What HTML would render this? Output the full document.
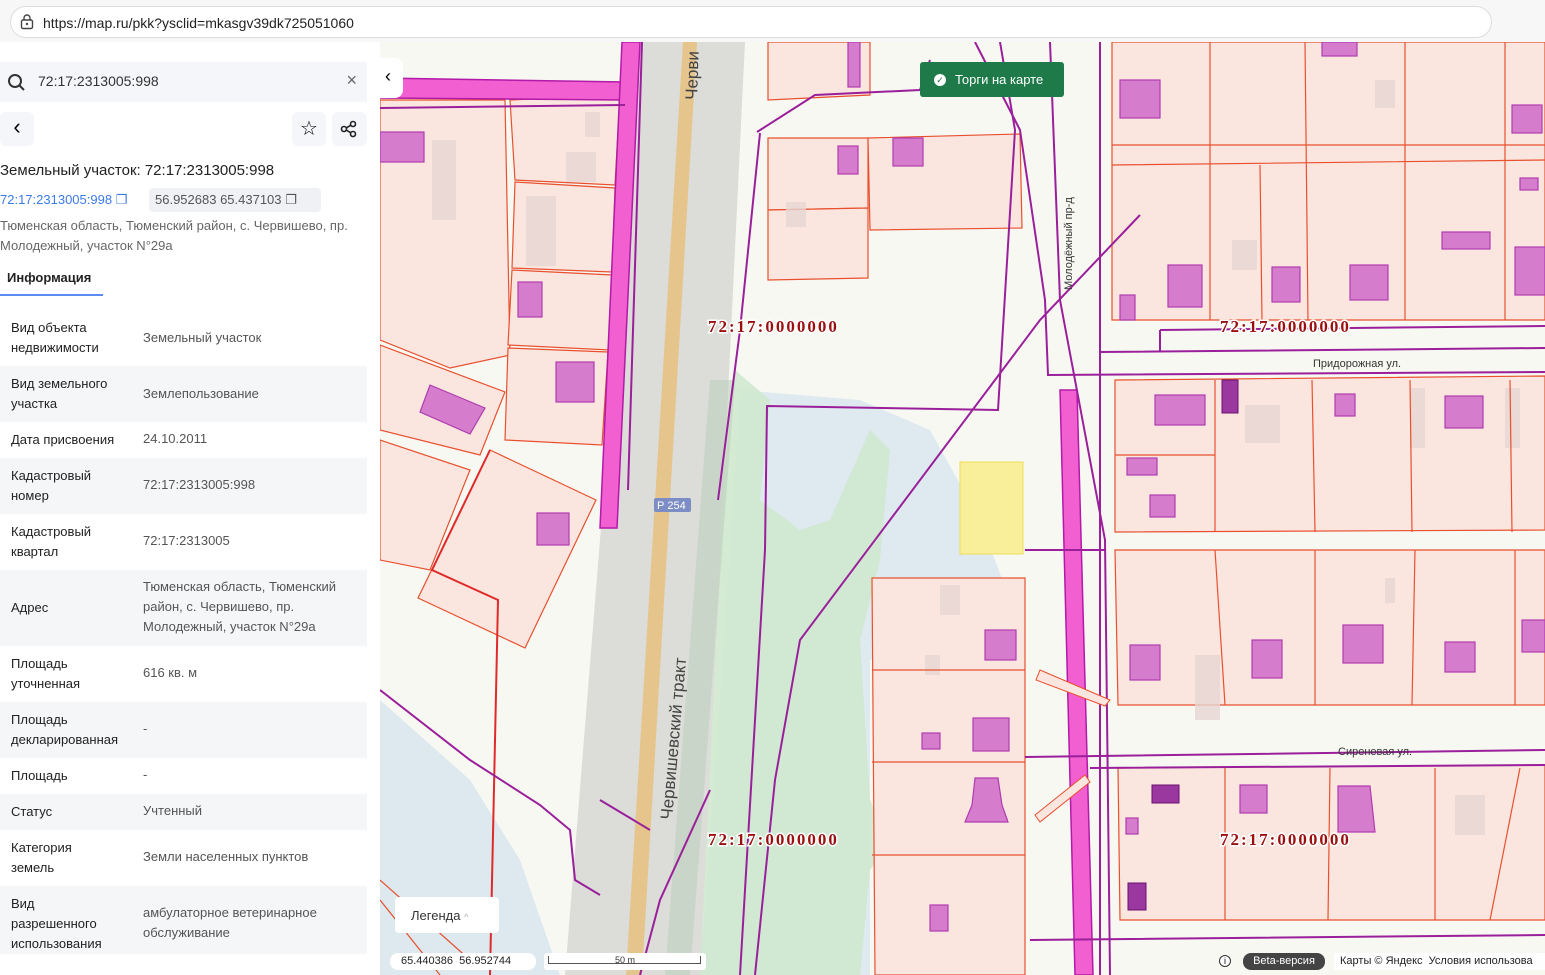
<!DOCTYPE html>
<html><head><meta charset="utf-8"><style>
*{margin:0;padding:0;box-sizing:border-box}
body{width:1545px;height:975px;overflow:hidden;font-family:"Liberation Sans","DejaVu Sans",sans-serif;background:#fff;position:relative}
#top{position:absolute;left:0;top:0;width:1545px;height:42px;background:#f7f7f7}
#url{position:absolute;left:10px;top:6px;width:1482px;height:32px;border:1px solid #ddd;border-radius:16px;background:#fff;font-size:14px;color:#222;padding:8px 0 0 32px}
#map{position:absolute;left:0;top:0}
#panel{position:absolute;left:0;top:42px;width:380px;height:933px;background:#fff}
.row{position:absolute;left:0;width:367px;font-size:13px;color:#222}
.row .k{position:absolute;left:11px;line-height:20px}
.row .v{position:absolute;left:143px;line-height:20px;color:#555}
.alt{background:#f5f6f8}
</style></head><body>
<svg id="map" width="1545" height="975" viewBox="0 0 1545 975">
<rect x="380" y="42" width="1165" height="933" fill="#f8f8f3"/>
<path d="M380 700 L470 780 L520 860 L560 975 L380 975Z" fill="#dde9ef"/>
<path d="M740 390 L860 400 L930 430 L980 520 L1010 600 L870 660 L870 975 L700 975 L720 700Z" fill="#dfeaf0"/>
<path d="M735 370 L770 400 L760 500 L800 530 L830 520 L870 430 L890 450 L880 560 L860 640 L870 800 L890 840 L870 870 L860 975 L690 975 L700 700Z" fill="#cfe8cf" opacity=".9"/>
<path d="M640 42 L745 42 L700 975 L565 975Z" fill="#dcdcd9"/>
<path d="M683 42 L697 42 L642 975 L626 975Z" fill="#e6c58c"/>
<path d="M710 380 L735 380 L690 975 L665 975Z" fill="#bcd1bc" opacity=".6"/>
<g fill="#fbe6df" stroke="#e8502e" stroke-width="1.2">
<path d="M380 100 L505 100 L510 355 L450 368 L380 340Z"/>
<path d="M510 100 L620 95 L615 185 L515 180Z"/>
<path d="M515 182 L615 188 L612 272 L512 268Z"/>
<path d="M512 270 L612 275 L610 350 L508 345Z"/>
<path d="M508 348 L608 352 L602 445 L505 440Z"/>
<path d="M380 345 L505 392 L480 455 L380 430Z"/>
<path d="M490 450 L596 500 L525 648 L418 598Z"/>
<path d="M380 440 L470 470 L430 570 L380 560Z"/>
<path d="M768 42 L870 42 L870 95 L768 100Z"/>
<path d="M768 138 L868 138 L868 208 L768 210Z"/>
<path d="M768 210 L868 208 L868 278 L768 280Z"/>
<path d="M868 138 L1020 134 L1022 228 L870 230Z"/>
<path d="M872 578 L1025 578 L1025 975 L875 975Z"/>
<path d="M1112 42 L1545 42 L1545 320 L1112 320Z"/>
<path d="M1115 380 L1545 376 L1545 530 L1115 532Z"/>
<path d="M1115 550 L1545 550 L1545 705 L1118 705Z"/>
<path d="M1118 768 L1545 765 L1545 920 L1120 920Z"/>
</g>
<g fill="#e6d6d2" opacity=".8">
<rect x="432" y="140" width="24" height="80"/><rect x="526" y="196" width="30" height="70"/><rect x="585" y="112" width="15" height="25"/>
<rect x="566" y="152" width="30" height="30"/><rect x="786" y="202" width="20" height="25"/><rect x="1232" y="240" width="25" height="30"/>
<rect x="1375" y="80" width="20" height="28"/><rect x="1245" y="405" width="35" height="38"/><rect x="1410" y="388" width="15" height="60"/>
<rect x="1505" y="388" width="15" height="60"/><rect x="1195" y="655" width="25" height="65"/><rect x="1385" y="578" width="10" height="25"/>
<rect x="940" y="585" width="20" height="30"/><rect x="925" y="655" width="15" height="20"/><rect x="1455" y="795" width="30" height="40"/>
</g>
<g stroke="#e8502e" stroke-width="1.2" fill="none">
<path d="M872 670 L1025 670 M872 762 L1025 762 M872 855 L1025 855"/>
<path d="M1210 42 L1210 320 M1305 42 L1308 320 M1405 42 L1405 320 M1505 42 L1505 320 M1112 145 L1545 145 M1112 165 L1545 160 M1260 165 L1262 320"/>
<path d="M1215 380 L1215 532 M1312 380 L1315 532 M1410 380 L1412 532 M1510 380 L1512 532 M1115 455 L1215 455"/>
<path d="M1215 550 L1225 705 M1315 550 L1315 705 M1415 550 L1412 705 M1515 550 L1515 705"/>
<path d="M1225 768 L1225 920 M1330 768 L1328 920 M1435 768 L1435 920 M1520 768 L1490 920"/>
<path d="M490 450 L432 570 L498 600 L490 975" stroke="#e02a2a" stroke-width="2"/>
<path d="M380 880 L470 960 M380 900 L440 975"/>
</g>
<g fill="#d57ccc" stroke="#b03cb0" stroke-width="1.2">
<rect x="380" y="132" width="44" height="30"/><rect x="518" y="282" width="24" height="35"/>
<rect x="556" y="362" width="38" height="40"/><path d="M430 385 L485 408 L470 434 L420 412Z"/>
<rect x="537" y="513" width="32" height="32"/><rect x="838" y="146" width="20" height="28"/>
<rect x="893" y="138" width="30" height="28"/><rect x="848" y="42" width="12" height="45"/>
<rect x="985" y="630" width="31" height="30"/><rect x="973" y="718" width="36" height="33"/>
<path d="M975 778 L998 778 L1002 805 L1008 822 L965 822 L972 805Z"/><rect x="922" y="733" width="18" height="16"/>
<rect x="930" y="905" width="18" height="26"/><rect x="1120" y="80" width="40" height="38"/>
<rect x="1168" y="265" width="34" height="42"/><rect x="1350" y="265" width="38" height="35"/>
<rect x="1442" y="232" width="48" height="17"/><rect x="1515" y="247" width="30" height="48"/>
<rect x="1120" y="295" width="15" height="25"/><rect x="1272" y="267" width="28" height="35"/>
<rect x="1155" y="395" width="50" height="30"/><rect x="1445" y="396" width="38" height="32"/>
<rect x="1335" y="394" width="20" height="22"/><rect x="1127" y="458" width="30" height="17"/>
<rect x="1150" y="495" width="25" height="22"/><rect x="1130" y="645" width="30" height="35"/>
<rect x="1252" y="640" width="30" height="38"/><rect x="1343" y="625" width="40" height="38"/>
<rect x="1445" y="642" width="30" height="30"/><rect x="1522" y="620" width="23" height="32"/>
<rect x="1240" y="785" width="27" height="28"/><path d="M1338 786 L1370 786 L1375 832 L1338 832Z"/>
<rect x="1126" y="818" width="12" height="16"/><rect x="1512" y="105" width="30" height="28"/>
<rect x="1520" y="178" width="18" height="12"/><rect x="1322" y="42" width="35" height="14"/>
</g>
<g fill="#9b38a0" stroke="#6a1070"><rect x="1222" y="380" width="16" height="33"/><rect x="1152" y="785" width="27" height="18"/><rect x="1128" y="883" width="18" height="27"/></g>
<g fill="#f25fd0" stroke="#b21aa8" stroke-width="1.5">
<path d="M380 78 L625 82 L623 100 L380 98Z"/>
<path d="M622 42 L640 42 L617 528 L600 528Z"/>
<path d="M1060 390 L1077 390 L1093 975 L1075 975Z"/>
</g>
<g stroke="#9a1f9a" stroke-width="2" fill="none">
<path d="M380 108 L625 105 M642 42 L628 490"/>
<path d="M757 132 L815 95 L920 90 L930 60 M760 133 L740 330 L718 500"/>
<path d="M975 42 L1020 130 L1045 300 L1048 375 L1545 372"/>
<path d="M1000 42 L1015 130 L998 410 L767 406 L765 550 L740 975"/>
<path d="M1140 215 L1040 320 L800 640 L775 780 L755 975"/>
<path d="M1050 42 L1060 300 L1105 540 L1110 975"/>
<path d="M1100 42 L1100 975"/>
<path d="M1100 352 L1545 348 M1160 330 L1545 326 M1160 330 L1160 352"/>
<path d="M1025 550 L1105 550 M1025 757 L1545 750 M1030 940 L1545 935 M1090 768 L1545 765"/>
<path d="M380 690 L470 760 L540 805 L570 830 L575 880 L600 895 M600 800 L650 830 M710 790 L660 900 L640 975"/>
</g>
<path d="M1040 670 L1110 700 L1105 706 L1036 680Z M1035 815 L1085 775 L1090 782 L1040 822Z" fill="#fbe6df" stroke="#e8502e"/>
<rect x="960" y="462" width="63" height="92" fill="#f9ef9a" stroke="#eedd55"/>
<g font-family="Liberation Serif" font-weight="bold" font-size="17" letter-spacing="2" fill="#9b0f0f" stroke="#fff" stroke-width="3" paint-order="stroke">
<text x="708" y="332">72:17:0000000</text><text x="1220" y="332">72:17:0000000</text>
<text x="708" y="845">72:17:0000000</text><text x="1220" y="845">72:17:0000000</text></g>
<g font-size="11" fill="#333"><text x="1313" y="367">Придорожная ул.</text><text x="1338" y="755">Сиреневая ул.</text>
<text transform="translate(1072 290) rotate(-90)">Молодёжный пр-д</text>
<text transform="translate(672 820) rotate(-85)" font-size="17" fill="#444">Червишевский тракт</text>
<text transform="translate(697 100) rotate(-88)" font-size="17" fill="#444">Черви</text></g>
<rect x="654" y="498" width="37" height="14" rx="2" fill="#7c8cc4"/><text x="657" y="509" font-size="11" fill="#fff">Р 254</text>
</svg>
<div id="top"><div id="url"><svg style="position:absolute;left:9px;top:7px" width="14" height="16" viewBox="0 0 14 16"><rect x="1.5" y="6" width="11" height="8.5" rx="1.5" fill="none" stroke="#444" stroke-width="1.4"/><path d="M4 6V4a3 3 0 0 1 6 0v2" fill="none" stroke="#444" stroke-width="1.4"/><circle cx="7" cy="10" r="1.2" fill="#444"/></svg>https://map.ru/pkk?ysclid=mkasgv39dk725051060</div></div>
<div style="position:absolute;left:380px;top:58px;width:23px;height:40px;background:#fff;border-radius:0 8px 8px 0;font-size:18px;padding:8px 0 0 5px">‹</div>
<div style="position:absolute;left:920px;top:62px;width:144px;height:35px;background:#1f7a4a;border-radius:3px;color:#fff;font-size:13px;padding:10px 0 0 35px">Торги на карте<span style="position:absolute;left:14px;top:12px;width:12px;height:12px;border-radius:50%;background:#fff;color:#1f7a4a;font-size:9px;text-align:center;line-height:12px">✓</span></div>
<div id="panel">
<div style="position:absolute;left:0;top:20px;width:367px;height:40px;background:#f5f6f9;font-size:14px;color:#333;padding:11px 0 0 38px">72:17:2313005:998<svg style="position:absolute;left:7px;top:11px" width="19" height="19" viewBox="0 0 19 19"><circle cx="8" cy="8" r="6" fill="none" stroke="#333" stroke-width="2"/><path d="M12.5 12.5L17 17" stroke="#333" stroke-width="2"/></svg><span style="position:absolute;right:10px;top:8px;font-size:18px;color:#666">×</span></div>
<div style="position:absolute;left:0;top:70px;width:34px;height:34px;background:#f5f6f9;border-radius:6px;font-size:22px;text-align:center;line-height:30px">‹</div>
<div style="position:absolute;left:292px;top:70px;width:34px;height:34px;background:#f5f6f9;border-radius:6px;font-size:20px;text-align:center;line-height:34px">☆</div>
<div style="position:absolute;left:332px;top:70px;width:35px;height:34px;background:#f5f6f9;border-radius:6px"><svg style="position:absolute;left:8px;top:8px" width="18" height="18" viewBox="0 0 18 18"><circle cx="13" cy="4" r="2.5" fill="none" stroke="#222" stroke-width="1.6"/><circle cx="4" cy="9" r="2.5" fill="none" stroke="#222" stroke-width="1.6"/><circle cx="13" cy="14" r="2.5" fill="none" stroke="#222" stroke-width="1.6"/><path d="M6.2 8L10.8 5.2M6.2 10L10.8 12.8" stroke="#222" stroke-width="1.6"/></svg></div>
<div style="position:absolute;left:0;top:120px;font-size:15px;color:#222">Земельный участок: 72:17:2313005:998</div>
<div style="position:absolute;left:0;top:150px;font-size:13px;color:#3b7be8">72:17:2313005:998 ❐</div>
<div style="position:absolute;left:149px;top:146px;width:172px;height:24px;background:#f0f1f4;border-radius:4px;font-size:13px;color:#555;padding:4px 0 0 6px">56.952683 65.437103 ❐</div>
<div style="position:absolute;left:0;top:174px;font-size:13px;color:#666;line-height:20px;width:370px">Тюменская область, Тюменский район, с. Червишево, пр. Молодежный, участок N°29а</div>
<div style="position:absolute;left:7px;top:228px;font-size:13px;font-weight:bold;color:#222">Информация</div>
<div style="position:absolute;left:0;top:252px;width:103px;height:2px;background:#5b8cf0"></div>
<div class="row" style="top:270px;height:54px"><div class="k" style="top:6px">Вид объекта<br>недвижимости</div><div class="v" style="top:16px">Земельный участок</div></div>
<div class="row alt" style="top:324px;height:56px"><div class="k" style="top:8px">Вид земельного<br>участка</div><div class="v" style="top:18px">Землепользование</div></div>
<div class="row" style="top:380px;height:36px"><div class="k" style="top:8px">Дата присвоения</div><div class="v" style="top:7px">24.10.2011</div></div>
<div class="row alt" style="top:416px;height:56px"><div class="k" style="top:8px">Кадастровый<br>номер</div><div class="v" style="top:17px">72:17:2313005:998</div></div>
<div class="row" style="top:472px;height:56px"><div class="k" style="top:8px">Кадастровый<br>квартал</div><div class="v" style="top:17px">72:17:2313005</div></div>
<div class="row alt" style="top:528px;height:76px"><div class="k" style="top:28px">Адрес</div><div class="v" style="top:7px">Тюменская область, Тюменский<br>район, с. Червишево, пр.<br>Молодежный, участок N°29а</div></div>
<div class="row" style="top:604px;height:56px"><div class="k" style="top:8px">Площадь<br>уточненная</div><div class="v" style="top:17px">616 кв. м</div></div>
<div class="row alt" style="top:660px;height:56px"><div class="k" style="top:8px">Площадь<br>декларированная</div><div class="v" style="top:17px">-</div></div>
<div class="row" style="top:716px;height:36px"><div class="k" style="top:8px">Площадь</div><div class="v" style="top:7px">-</div></div>
<div class="row alt" style="top:752px;height:36px"><div class="k" style="top:8px">Статус</div><div class="v" style="top:7px">Учтенный</div></div>
<div class="row" style="top:788px;height:56px"><div class="k" style="top:8px">Категория<br>земель</div><div class="v" style="top:17px">Земли населенных пунктов</div></div>
<div class="row alt" style="top:844px;height:68px"><div class="k" style="top:8px">Вид<br>разрешенного<br>использования</div><div class="v" style="top:17px">амбулаторное ветеринарное<br>обслуживание</div></div>
</div>
<div style="position:absolute;left:395px;top:897px;width:104px;height:36px;background:#fff;border-radius:4px;font-size:13px;color:#333;padding:11px 0 0 16px">Легенда <span style="font-size:9px;color:#aaa">^</span></div>
<div style="position:absolute;left:390px;top:953px;width:146px;height:17px;background:#fff;border-radius:8px;font-size:11px;color:#222;padding:2px 0 0 11px">65.440386 &nbsp;56.952744</div>
<div style="position:absolute;left:544px;top:953px;width:162px;height:17px;background:#fff;border-radius:3px;font-size:9px;color:#333;text-align:center;padding-top:2px"><div style="position:absolute;left:4px;top:3px;width:153px;height:8px;border:1px solid #555;border-top:none"></div>50 m</div>
<div style="position:absolute;left:1243px;top:953px;width:82px;height:17px;background:#444;border-radius:8px;font-size:11px;color:#fff;text-align:center;padding-top:2px">Beta-версия</div>
<div style="position:absolute;left:1219px;top:955px;width:12px;height:12px;border:1px solid #333;border-radius:50%;font-size:9px;text-align:center;background:#fff">i</div>
<div style="position:absolute;left:1334px;top:953px;width:211px;height:17px;background:rgba(255,255,255,.85);font-size:11px;color:#222;padding:2px 0 0 6px;white-space:nowrap">Карты © Яндекс &nbsp;Условия использова</div>
</body></html>
